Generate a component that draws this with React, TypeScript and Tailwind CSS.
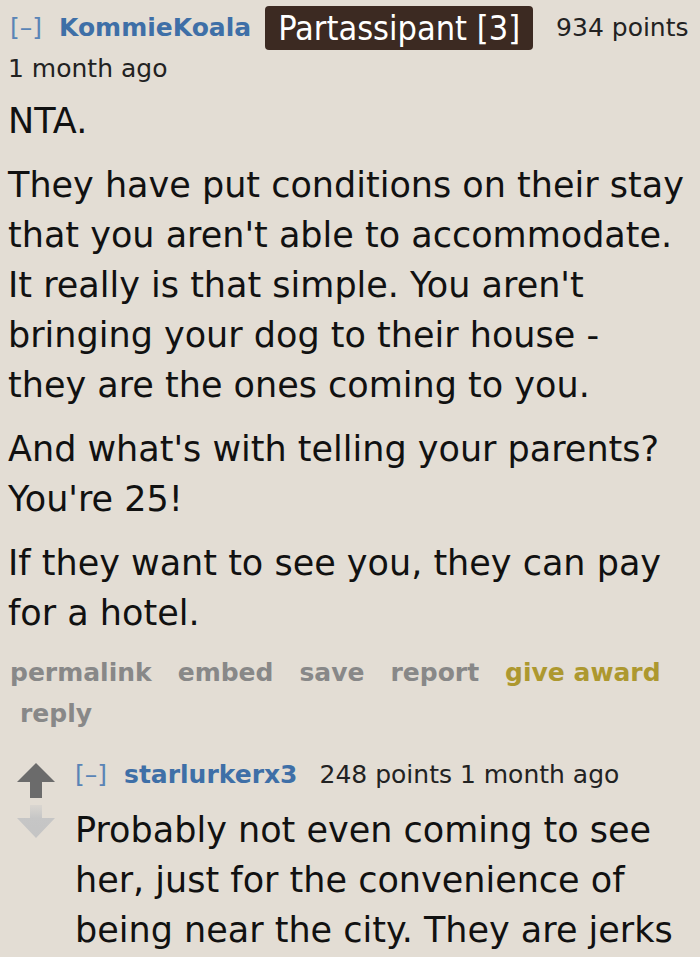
export default function App() {
  return (
    <div className="min-h-screen bg-[#e3ddd4] px-[8px] text-[#111] [font-family:'DejaVu_Sans',Verdana,sans-serif]">
      {/* comment header */}
      <div className="flex h-[56px] items-center text-[25px] leading-[26px] whitespace-nowrap">
        <span className="ml-[2px] text-[#5a84b6]">[–]</span>
        <span className="ml-[17px] font-bold text-[#3e6fa7]">KommieKoala</span>
        <span className="ml-[14px] rounded-[4px] bg-[#3c2a22] px-[13px] py-[4px] text-[34px] leading-[36px] text-white [font-family:'DejaVu_Sans_Condensed','DejaVu_Sans',sans-serif]">
          Partassipant [3]
        </span>
        <span className="ml-[23px] text-[#222]">934 points</span>
      </div>
      <div className="text-[25px] leading-[26px] text-[#222]">1 month ago</div>

      <div className="mt-[14px] text-[35px] leading-[50px]">
        <p className="mb-[14px]">NTA.</p>
        <p className="mb-[14px]">
          They have put conditions on their stay that you aren't able to accommodate. It really is that simple. You
          aren't bringing your dog to their house -<br />
          they are the ones coming to you.
        </p>
        <p className="mb-[14px]">And what's with telling your parents? You're 25!</p>
        <p className="mb-[14px]">If they want to see you, they can pay for a hotel.</p>
      </div>

      {/* action links */}
      <ul className="flex flex-wrap gap-x-[26px] text-[25px] leading-[41px] font-bold text-[#888]">
        <li className="ml-[2px]">permalink</li>
        <li>embed</li>
        <li>save</li>
        <li>report</li>
        <li className="text-[#ad982f]">give award</li>
        <li className="ml-[12px]">reply</li>
      </ul>

      {/* child comment */}
      <div className="mt-[28px] ml-[9px] flex gap-[20px]">
        <div className="flex w-[38px] flex-col items-center pt-[1px]">
          <svg width="38" height="35" viewBox="0 0 38 35">
            <path d="M19 0 L38 19 L25 19 L25 35 L13 35 L13 19 L0 19 Z" fill="#6b6b6b" />
          </svg>
          <svg width="38" height="34" viewBox="0 0 38 34" className="mt-[7px]">
            <defs>
              <linearGradient id="dn" x1="0" y1="0" x2="0" y2="1">
                <stop offset="0" stopColor="#c8c8c8" stopOpacity="0.35" />
                <stop offset="0.4" stopColor="#c6c6c6" />
                <stop offset="1" stopColor="#c4c4c4" />
              </linearGradient>
            </defs>
            <path d="M13 0 L25 0 L25 13 L38 13 L19 33 L0 13 L13 13 Z" fill="url(#dn)" />
          </svg>
        </div>
        <div className="flex-1">
          <div className="text-[25px] leading-[26px] whitespace-nowrap">
            <span className="text-[#5a84b6]">[–]</span>
            <span className="ml-[17px] font-bold text-[#3e6fa7]">starlurkerx3</span>
            <span className="ml-[22px] text-[#222]">
              248 points 1 month ago
            </span>
          </div>
          <p className="mt-[17px] text-[35px] leading-[50px]">
            Probably not even coming to see her, just for the convenience of being near the city. They are jerks
          </p>
        </div>
      </div>
    </div>
  );
}
